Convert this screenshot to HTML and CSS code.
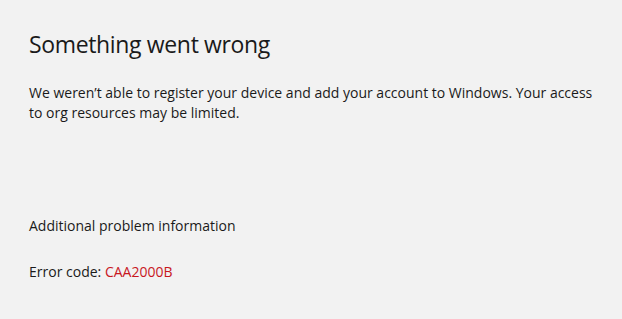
FILE: index.html
```html
<!DOCTYPE html>
<html>
<head>
<meta charset="utf-8">
<link rel="stylesheet" href="styles.css">
</head>
<body>
<main class="page">
  <h1 class="title">Something went wrong</h1>
  <p class="message">We weren’t able to register your device and add your account to Windows. Your access to org resources may be limited.</p>
  <section class="details">
    <h2 class="details-title">Additional problem information</h2>
    <p class="code">Error code: <span class="code-value">CAA2000B</span></p>
  </section>
</main>
</body>
</html>
```
FILE: styles.css
```css
html, body {
  margin: 0;
  padding: 0;
  background: #f2f2f2;
}
body {
  font-family: "Open Sans", "Noto Sans", sans-serif;
  color: #1a1a1a;
  width: 622px;
  height: 319px;
  overflow: hidden;
}
.page {
  padding: 28px 14px 0 29px;
}
.title {
  margin: 0;
  font-weight: 400;
  font-size: 23px;
  line-height: 32px;
  letter-spacing: -0.35px;
}
.message {
  margin: 23px 0 0;
  font-size: 14px;
  line-height: 20px;
}
.details {
  margin-top: 93px;
}
.details-title {
  margin: 0;
  font-weight: 400;
  font-size: 14px;
  line-height: 20px;
}
.code {
  margin: 26px 0 0;
  font-size: 14px;
  line-height: 20px;
}
.code-value {
  color: #c8171e;
}
```
